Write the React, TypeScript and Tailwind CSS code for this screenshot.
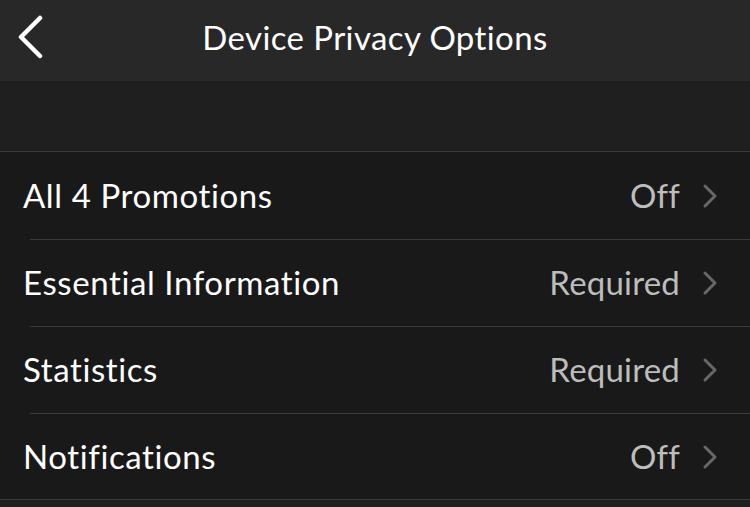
const rows = [
  { label: "All 4 Promotions", value: "Off" },
  { label: "Essential Information", value: "Required" },
  { label: "Statistics", value: "Required" },
  { label: "Notifications", value: "Off" },
];

const Chevron = () => (
  <svg className="ml-[22px] shrink-0" width="16" height="26" viewBox="0 0 16 26">
    <path d="M3 3 L13 13 L3 23" fill="none" stroke="#676767" strokeWidth="3" strokeLinecap="round" strokeLinejoin="round" />
  </svg>
);

const App = () => {
  return (
    <div className="w-[750px] h-[507px] bg-[#1f1f1f] overflow-hidden" style={{ fontFamily: "Lato, 'Open Sans', sans-serif" }}>
      <div className="relative h-[81px] bg-[#282828] flex items-center justify-center">
        <svg className="absolute left-[15px] top-[15px]" width="30" height="44" viewBox="0 0 30 44">
          <path d="M25 3 L6 22 L25 41" fill="none" stroke="#ffffff" strokeWidth="4.5" strokeLinecap="round" strokeLinejoin="round" />
        </svg>
        <h1 className="text-[33px] text-white tracking-[0.4px] -mt-[6px]">Device Privacy Options</h1>
      </div>
      <div className="h-[70px]" />
      <div className="bg-[#191919] border-t border-b border-[#3a3a3a]">
        {rows.map((row, i) => (
          <div key={row.label} className="pl-[30px]">
            <div className={`${i === 3 ? "h-[86px]" : "h-[87px]"} flex items-center pr-[32px] ${i > 0 ? "border-t border-[#3a3a3a]" : ""}`}>
              <span className="-ml-[7px] flex-1 text-[33px] text-white tracking-[0.6px]">{row.label}</span>
              <span className="text-[33px] text-[#bdbdbd] tracking-[0.2px]">{row.value}</span>
              <Chevron />
            </div>
          </div>
        ))}
      </div>
    </div>
  );
};

export default App;
